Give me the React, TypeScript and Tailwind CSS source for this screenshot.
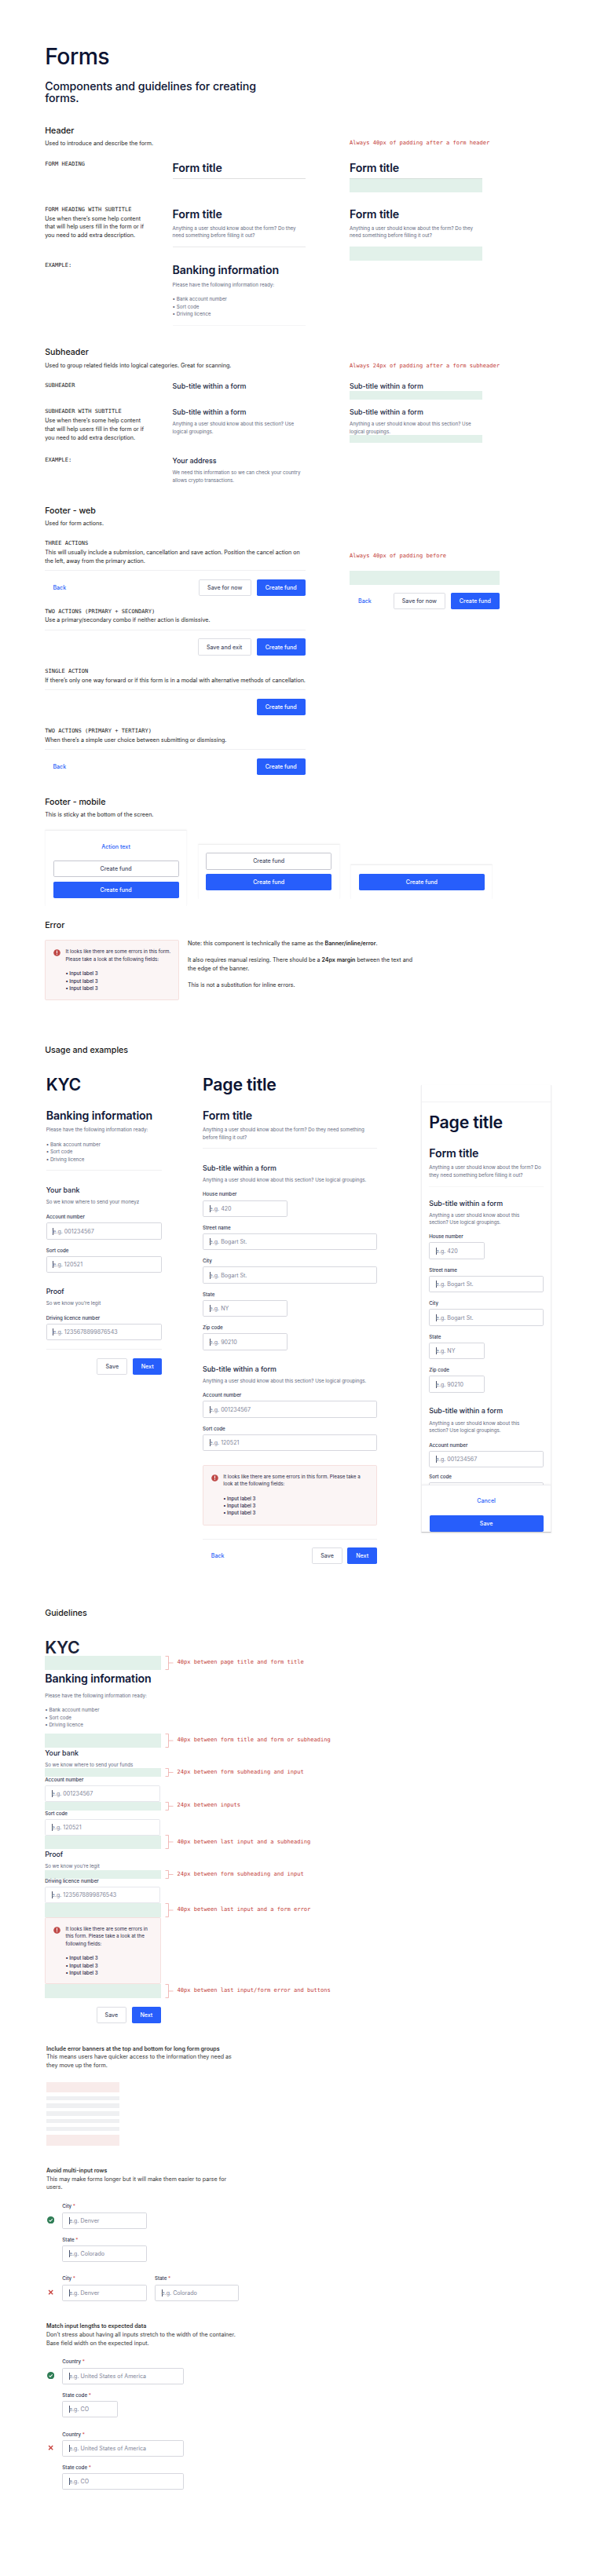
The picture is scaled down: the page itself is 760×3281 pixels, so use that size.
import type { ReactNode } from "react";

type Kids = { children: ReactNode; className?: string };

const H = ({ children }: { children: ReactNode }) => (
  <h2 className="text-[10.65px] leading-[13px] font-medium text-[#151515]">{children}</h2>
);
const P = ({ children, className = "text-[#222222]" }: Kids) => (
  <p className={`text-[7.1px] leading-[10.67px] ${className}`}>{children}</p>
);
const Small = ({ children, className = "" }: Kids) => (
  <p className={`text-[6.2px] leading-[9.33px] text-[#62677d] ${className}`}>{children}</p>
);
const Mono = ({ children, className = "text-[#1c1c1c]" }: Kids) => (
  <p className={`font-['DejaVu_Sans_Mono','Liberation_Mono',monospace] text-[7.05px] leading-[10.67px] ${className}`}>
    {children}
  </p>
);
const Note = ({ children, className = "" }: Kids) => (
  <Mono className={`text-[#bf3a36] ${className}`}>{children}</Mono>
);
const PageTitle = ({ children, className = "text-[#0c1433]" }: Kids) => (
  <h2 className={`text-[21.3px] leading-[26px] font-semibold tracking-[-0.01em] ${className}`}>{children}</h2>
);
const FormTitle = ({ children, className = "" }: Kids) => (
  <h3 className={`text-[14.2px] leading-[17px] font-semibold tracking-[-0.01em] text-[#0f1738] ${className}`}>
    {children}
  </h3>
);
const SubTitle = ({ children, className = "" }: Kids) => (
  <h4 className={`text-[8.87px] leading-[11px] font-medium text-[#151c3b] ${className}`}>{children}</h4>
);
const Rule = ({ className = "bg-[#f0f0f2]" }: { className?: string }) => <div className={`h-px ${className}`} />;
const Green = ({ className = "" }: { className?: string }) => <div className={`bg-[#e2f1ea] ${className}`} />;

const Sub = ({ title, children, className = "" }: Kids & { title: string }) => (
  <div className={className}>
    <SubTitle>{title}</SubTitle>
    <Small className="mt-[5.3px]">{children}</Small>
  </div>
);

function Button({
  children,
  kind = "primary",
  strong = false,
  className = "",
}: Kids & { kind?: "primary" | "secondary" | "link"; strong?: boolean }) {
  const look =
    kind === "primary"
      ? "bg-[#275efb] text-white"
      : kind === "secondary"
        ? strong
          ? "border border-[#c6c7d0] bg-white text-[#4a4f66]"
          : "border border-[#dcdde3] bg-white text-[#4a4f66]"
        : "text-[#2c62f8]";
  return (
    <button
      className={`flex h-[21.3px] shrink-0 items-center justify-center rounded-[1.8px] text-[7.1px] leading-[9px] font-medium ${look} ${className}`}
    >
      {children}
    </button>
  );
}

function Field({
  label,
  hint = "",
  required = false,
  className = "h-[32.4px]",
  box = "h-[21.3px] border-[#d6d7de]",
}: {
  label: string;
  hint?: string;
  required?: boolean;
  className?: string;
  box?: string;
}) {
  return (
    <div className={`shrink-0 ${className}`}>
      <div className="text-[6.2px] leading-[8px] font-medium text-[#2e344d]">
        {label}
        {required && <span className="text-[#d0453f]"> *</span>}
      </div>
      <div
        className={`mt-[3.1px] flex items-center rounded-[1.8px] border bg-white pl-[7.6px] text-[7.1px] leading-[9px] text-[#808497] ${box}`}
      >
        {hint && <span className="-mr-px h-[9px] w-px bg-[#4d5269]" />}
        {hint}
      </div>
    </div>
  );
}

function Banner({ children, className = "h-[77px]" }: Kids) {
  return (
    <div className={`flex rounded-[1.8px] border border-[#f5e0de] bg-[#fbf5f5] pt-[9.2px] ${className}`}>
      <svg viewBox="0 0 18 18" className="mt-[2px] ml-[10.2px] h-[9px] w-[9px] shrink-0">
        <circle cx="9" cy="9" r="8.6" fill="#bf4a48" />
        <path d="M9 4.2v5.6" stroke="#fff" strokeWidth="2" strokeLinecap="round" />
        <circle cx="9" cy="13" r="1.2" fill="#fff" />
      </svg>
      <div className="ml-[6px] text-[6.2px] leading-[9.33px] text-[#1e2442]">
        {children}
        <ul className="mt-[9.33px] font-medium">
          <li>• Input label 3</li>
          <li>• Input label 3</li>
          <li>• Input label 3</li>
        </ul>
      </div>
    </div>
  );
}

const bankBullets = (
  <>
    Please have the following information ready:
    <br />
    <br />• Bank account number
    <br />• Sort code
    <br />• Driving licence
  </>
);

const helpText = (
  <P className="mt-[1.2px] text-[#222222]">
    Use when there’s some help content
    <br />
    that will help users fill in the form or if
    <br />
    you need to add extra description.
  </P>
);

const formHelp = (
  <>
    Anything a user should know about the form? Do they
    <br />
    need something before filling it out?
  </>
);
const sectionHelp = (
  <>
    Anything a user should know about this section? Use
    <br />
    logical groupings.
  </>
);

const Row = ({ children, className = "" }: Kids) => (
  <div className={`grid grid-cols-[162.4px_169.2px_225.4px] ${className}`}>{children}</div>
);

function HeaderSection() {
  return (
    <section className="h-[282.6px] pl-[57.2px]">
      <H>Header</H>
      <div className="mt-[5.2px] flex">
        <P className="w-[387.8px] text-[#222222]">Used to introduce and describe the form.</P>
        <Note className="-mt-[0.6px]">Always 40px of padding after a form header</Note>
      </div>
      <Row className="mt-[15.1px] h-[58.3px]">
        <Mono>FORM HEADING</Mono>
        <div className="pt-[1.3px]">
          <FormTitle>Form title</FormTitle>
          <Rule className="mt-[5px] bg-[#dedede]" />
        </div>
        <div className="ml-[56.2px] w-[169.2px] pt-[1.3px]">
          <FormTitle>Form title</FormTitle>
          <Green className="mt-[5px] h-[18px] border-t border-[#d5dfda]" />
        </div>
      </Row>
      <Row className="h-[71.4px]">
        <div>
          <Mono>FORM HEADING WITH SUBTITLE</Mono>
          {helpText}
        </div>
        <div className="pt-[1.7px]">
          <FormTitle>Form title</FormTitle>
          <Small className="mt-[5.4px]">{formHelp}</Small>
          <Rule className="mt-[9.2px] bg-[#e8e8ea]" />
        </div>
        <div className="ml-[56.2px] w-[169.2px] pt-[1.7px]">
          <FormTitle>Form title</FormTitle>
          <Small className="mt-[5.4px]">{formHelp}</Small>
          <Green className="mt-[9.4px] h-[18.3px]" />
        </div>
      </Row>
      <Row>
        <Mono>EXAMPLE:</Mono>
        <div className="pt-[1.9px]">
          <FormTitle>Banking information</FormTitle>
          <Small className="mt-[5.5px]">{bankBullets}</Small>
          <Rule className="mt-[9.5px] bg-[#f5f5f6]" />
        </div>
      </Row>
    </section>
  );
}

function SubheaderSection() {
  return (
    <section className="h-[201.4px] pl-[57.2px]">
      <H>Subheader</H>
      <div className="mt-[5.6px] flex">
        <P className="w-[387.8px] text-[#222222]">
          Used to group related fields into logical categories. Great for scanning.
        </P>
        <Note>Always 24px of padding after a form subheader</Note>
      </div>
      <Row className="mt-[14.4px] h-[33px]">
        <Mono className="mt-[0.5px] text-[#1c1c1c]">SUBHEADER</Mono>
        <SubTitle>Sub-title within a form</SubTitle>
        <div className="ml-[56.2px] w-[169.2px]">
          <SubTitle>Sub-title within a form</SubTitle>
          <Green className="mt-[1.3px] h-[10.7px]" />
        </div>
      </Row>
      <Row className="h-[62px]">
        <div className="pt-[0.4px]">
          <Mono>SUBHEADER WITH SUBTITLE</Mono>
          {helpText}
        </div>
        <Sub title="Sub-title within a form">{sectionHelp}</Sub>
        <div className="ml-[56.2px] w-[169.2px]">
          <Sub title="Sub-title within a form">{sectionHelp}</Sub>
          <Green className="h-[10.5px]" />
        </div>
      </Row>
      <Row>
        <Mono>EXAMPLE:</Mono>
        <Sub title="Your address">
          We need this information so we can check your country
          <br />
          allows crypto transactions.
        </Sub>
      </Row>
    </section>
  );
}

function Actions({ title, text, children, className }: Kids & { title: string; text: ReactNode }) {
  return (
    <div className={className}>
      <Mono>{title}</Mono>
      <P className="mt-[1.1px] text-[#222222]">{text}</P>
      <Rule className="mt-[5.8px] bg-[#f0f0f2]" />
      <div className="mt-[10.5px] flex justify-end">{children}</div>
    </div>
  );
}

function FooterWebSection() {
  return (
    <section className="h-[371px] pl-[57.2px]">
      <H>Footer - web</H>
      <P className="mt-[5.2px] text-[#222222]">Used for form actions.</P>
      <div className="mt-[14.8px] flex">
        <div className="w-[331.6px]">
          <Actions
            className="h-[86.3px]"
            title="THREE ACTIONS"
            text={
              <>
                This will usually include a submission, cancellation and save action. Position the cancel action on
                <br />
                the left, away from the primary action.
              </>
            }
          >
            <Button kind="link" className="mr-auto ml-[10.2px]">Back</Button>
            <Button kind="secondary" className="mr-[7.1px] w-[66.6px]">Save for now</Button>
            <Button className="w-[62.2px]">Create fund</Button>
          </Actions>
          <Actions
            className="h-[76.3px]"
            title="TWO ACTIONS (PRIMARY + SECONDARY)"
            text="Use a primary/secondary combo if neither action is dismissive."
          >
            <Button kind="secondary" className="mr-[7.1px] w-[68px]">Save and exit</Button>
            <Button className="w-[62.2px]">Create fund</Button>
          </Actions>
          <Actions
            className="h-[76px]"
            title="SINGLE ACTION"
            text="If there’s only one way forward or if this form is in a modal with alternative methods of cancellation."
          >
            <Button className="w-[62.2px]">Create fund</Button>
          </Actions>
          <Actions
            className="h-[76px]"
            title="TWO ACTIONS (PRIMARY + TERTIARY)"
            text="When there’s a simple user choice between submitting or dismissing."
          >
            <Button kind="link" className="mr-auto ml-[10.2px]">Back</Button>
            <Button className="w-[62.2px]">Create fund</Button>
          </Actions>
        </div>
        <div className="ml-[56.2px] w-[191px] pt-[15.3px]">
          <Note>Always 40px of padding before</Note>
          <Green className="mt-[13.6px] h-[17.7px]" />
          <div className="mt-[10.6px] flex">
            <Button kind="link" className="mr-auto ml-[11px]">Back</Button>
            <Button kind="secondary" className="mr-[6.6px] w-[66.6px]">Save for now</Button>
            <Button className="w-[62.2px]">Create fund</Button>
          </div>
        </div>
      </div>
    </section>
  );
}

const mobileCard =
  "flex w-[180.8px] flex-col border-x border-t border-x-[#f9f9fa] border-t-[#eeeeef] px-[9.4px] pt-[10.3px] shadow-[0_-1px_2px_rgba(0,0,0,0.03)]";

function FooterMobileSection() {
  return (
    <section className="h-[157.6px] pl-[57.2px]">
      <H>Footer - mobile</H>
      <P className="mt-[5.8px] text-[#222222]">This is sticky at the bottom of the screen.</P>
      <div className="mt-[12.8px] flex items-start gap-[13.8px]">
        <div className={`${mobileCard} h-[97.3px]`}>
          <Button kind="link">Action text</Button>
          <Button kind="secondary" strong className="mt-[6.6px]">Create fund</Button>
          <Button className="mt-[5.6px]">Create fund</Button>
        </div>
        <div className={`${mobileCard} mt-[18px] h-[69.7px]`}>
          <Button kind="secondary" strong>Create fund</Button>
          <Button className="mt-[5.2px]">Create fund</Button>
        </div>
        <div className={`${mobileCard} mt-[44.4px] h-[43.3px]`}>
          <Button>Create fund</Button>
        </div>
      </div>
    </section>
  );
}

function ErrorSection() {
  return (
    <section className="h-[159px] pl-[57.2px]">
      <H>Error</H>
      <div className="mt-[11.8px] flex">
        <Banner className="h-[77px] w-[171.2px]">
          It looks like there are some errors in this form.
          <br />
          Please take a look at the following fields:
        </Banner>
        <P className="ml-[10.6px] text-[#222222]">
          Note: this component is technically the same as the <b className="font-semibold">Banner/inline/error</b>.
          <br />
          <br />
          It also requires manual resizing. There should be a <b className="font-semibold">24px margin</b> between the
          text and
          <br />
          the edge of the banner.
          <br />
          <br />
          This is not a substitution for inline errors.
        </P>
      </div>
    </section>
  );
}

function KycExample() {
  return (
    <div className="w-[147.8px]">
      <PageTitle>KYC</PageTitle>
      <FormTitle className="mt-[18px]">Banking information</FormTitle>
      <Small className="mt-[5.5px]">{bankBullets}</Small>
      <Rule className="mt-[9px] bg-[#f0f0f2]" />
      <Sub title="Your bank" className="mt-[18.7px]">So we know where to send your moneyz</Sub>
      <Field className="mt-[10.9px] h-[32.4px]" label="Account number" hint="e.g. 001234567" />
      <Field className="mt-[10.1px] h-[32.4px]" label="Sort code" hint="e.g. 120521" />
      <Sub title="Proof" className="mt-[17.8px]">So we know you’re legit</Sub>
      <Field className="mt-[10.2px] h-[32.4px]" label="Driving licence number" hint="e.g. 1235678899876543" />
      <Rule className="mt-[11.3px] bg-[#f0f0f2]" />
      <div className="mt-[10.5px] flex justify-end gap-[6.4px]">
        <Button kind="secondary" className="w-[39.3px]">Save</Button>
        <Button className="w-[37.7px]">Next</Button>
      </div>
    </div>
  );
}

function PageExample() {
  return (
    <div className="ml-[51.5px] w-[222px]">
      <PageTitle>Page title</PageTitle>
      <FormTitle className="mt-[18px]">Form title</FormTitle>
      <Small className="mt-[5.5px]">
        Anything a user should know about the form? Do they need something
        <br />
        before filling it out?
      </Small>
      <Rule className="mt-[8.8px] bg-[#f0f0f2]" />
      <Sub title="Sub-title within a form" className="mt-[18.7px]">
        Anything a user should know about this section? Use logical groupings.
      </Sub>
      <div className="mt-[10.2px] flex flex-col gap-[10.1px]">
        <Field label="House number" hint="e.g. 420" className="h-[32.4px] w-[108px]" />
        <Field label="Street name" hint="e.g. Bogart St." />
        <Field label="City" hint="e.g. Bogart St." />
        <Field label="State" hint="e.g. NY" className="h-[32.4px] w-[108px]" />
        <Field label="Zip code" hint="e.g. 90210" className="h-[32.4px] w-[108px]" />
      </div>
      <Sub title="Sub-title within a form" className="mt-[17.8px]">
        Anything a user should know about this section? Use logical groupings.
      </Sub>
      <div className="mt-[10.2px] flex flex-col gap-[10.1px]">
        <Field label="Account number" hint="e.g. 001234567" />
        <Field label="Sort code" hint="e.g. 120521" />
      </div>
      <Banner className="mt-[17.3px] h-[77px]">
        It looks like there are some errors in this form. Please take a
        <br />
        look at the following fields:
      </Banner>
      <Rule className="mt-[17.3px] bg-[#f0f0f2]" />
      <div className="mt-[10px] flex gap-[6.4px]">
        <Button kind="link" className="mr-auto ml-[10.8px]">Back</Button>
        <Button kind="secondary" className="w-[38.7px]">Save</Button>
        <Button className="w-[37.7px]">Next</Button>
      </div>
    </div>
  );
}

function PhoneExample() {
  const help = (
    <>
      Anything a user should know about this
      <br />
      section? Use logical groupings.
    </>
  );
  return (
    <div className="mt-[14.3px] ml-[56px] flex h-[570px] w-[166.3px] flex-col border-x border-b border-x-[#efeff1] border-b-[#c4c4c8] shadow-[0_1px_2px_rgba(0,0,0,0.08)]">
      <div className="h-[22px] shrink-0 border-b border-[#f1f1f3]" />
      <div className="min-h-0 flex-1 overflow-hidden px-[9.2px]">
        <PageTitle className="mt-[12px] text-[#0c1433]">Page title</PageTitle>
        <FormTitle className="mt-[17.7px]">Form title</FormTitle>
        <Small className="mt-[5.5px]">
          Anything a user should know about the form? Do
          <br />
          they need something before filling it out?
        </Small>
        <Rule className="mt-[9.8px] bg-[#f6f6f7]" />
        <Sub title="Sub-title within a form" className="mt-[14.7px]">{help}</Sub>
        <div className="mt-[9.8px] flex flex-col gap-[10.1px]">
          <Field label="House number" hint="e.g. 420" className="h-[32.4px] w-[71px]" />
          <Field label="Street name" hint="e.g. Bogart St." />
          <Field label="City" hint="e.g. Bogart St." />
          <Field label="State" hint="e.g. NY" className="h-[32.4px] w-[71px]" />
          <Field label="Zip code" hint="e.g. 90210" className="h-[32.4px] w-[71px]" />
        </div>
        <Sub title="Sub-title within a form" className="mt-[17.8px]">{help}</Sub>
        <Field className="mt-[10.1px] h-[32.4px]" label="Account number" hint="e.g. 001234567" />
        <Field className="mt-[8.3px] h-[32.4px]" label="Sort code" />
      </div>
      <div className="flex h-[60.6px] shrink-0 flex-col border-t border-[#ededf0] px-[9.7px] pt-[9.4px] shadow-[0_-1px_2px_rgba(0,0,0,0.04)]">
        <Button kind="link">Cancel</Button>
        <Button className="mt-[7.3px]">Save</Button>
      </div>
    </div>
  );
}

function UsageSection() {
  return (
    <section className="h-[716.7px] pl-[57.2px]">
      <H>Usage and examples</H>
      <div className="mt-[23.7px] ml-[1.5px] flex items-start">
        <KycExample />
        <PageExample />
        <PhoneExample />
      </div>
    </section>
  );
}

function Gap({ children, tall = false, className }: Kids & { tall?: boolean }) {
  return (
    <div className={`flex items-center ${className}`}>
      <Green className="h-full w-[148px]" />
      <svg
        viewBox={tall ? "0 0 11 18" : "0 0 11 11"}
        className={tall ? "ml-[5px] h-[18px] w-[11px]" : "ml-[5px] h-[11px] w-[11px]"}
      >
        <path
          d={tall ? "M0.5 0.5H4.5V17.5H0.5M4.5 9H10.5" : "M0.5 0.5H4.5V10.5H0.5M4.5 5.5H10.5"}
          fill="none"
          stroke="#eda9a6"
          strokeWidth="0.8"
        />
      </svg>
      <Note className="-mt-px ml-[4.3px]">{children}</Note>
    </div>
  );
}

const guideField = "h-[20.9px] border-[#e6e7ec]";

function SpacingGuide() {
  return (
    <div className="mt-[23.7px] w-[500px]">
      <PageTitle className="h-[24.3px] text-[#1b2338]">KYC</PageTitle>
      <Gap tall className="h-[17.7px]">40px between page title and form title</Gap>
      <FormTitle className="mt-[2.3px]">Banking information</FormTitle>
      <Small className="mt-[8.8px]">{bankBullets}</Small>
      <Gap tall className="mt-[6.5px] h-[17.7px]">40px between form title and form or subheading</Gap>
      <Sub title="Your bank" className="mt-px">So we know where to send your funds</Sub>
      <Gap className="h-[10.5px]">24px between form subheading and input</Gap>
      <Field className="mt-[0.4px] h-[32px] w-[147px]" box={guideField} label="Account number" hint="e.g. 001234567" />
      <Gap className="h-[10.5px]">24px between inputs</Gap>
      <Field className="h-[32px] w-[147px]" box={guideField} label="Sort code" hint="e.g. 120521" />
      <Gap tall className="h-[17.6px]">40px between last input and a subheading</Gap>
      <Sub title="Proof" className="mt-px">So we know you’re legit</Sub>
      <Gap className="mt-[0.4px] h-[10.5px]">24px between form subheading and input</Gap>
      <Field
        className="-mt-[0.6px] h-[32px] w-[147px]"
        box={guideField}
        label="Driving licence number"
        hint="e.g. 1235678899876543"
      />
      <Gap tall className="h-[17.9px]">40px between last input and a form error</Gap>
      <Banner className="h-[85px] w-[148px]">
        It looks like there are some errors in
        <br />
        this form. Please take a look at the
        <br />
        following fields:
      </Banner>
      <Gap tall className="h-[17.7px]">40px between last input/form error and buttons</Gap>
      <div className="mt-[11.4px] flex w-[148px] justify-end gap-[6.4px]">
        <Button kind="secondary" className="w-[38.5px]">Save</Button>
        <Button className="w-[37.7px]">Next</Button>
      </div>
    </div>
  );
}

const Check = () => (
  <svg viewBox="0 0 18 18" className="mt-[16.2px] mr-[10px] ml-px h-[9.3px] w-[9.3px] shrink-0">
    <circle cx="9" cy="9" r="9" fill="#2f7d55" />
    <path d="M5 9.3l2.8 2.8 5.2-5.4" fill="none" stroke="#fff" strokeWidth="2" />
  </svg>
);
const Cross = () => (
  <svg viewBox="0 0 18 18" className="mt-[16.9px] mr-[10px] ml-px h-[9.3px] w-[9.3px] shrink-0">
    <path d="M4 4l10 10M14 4L4 14" fill="none" stroke="#c8423e" strokeWidth="2.6" />
  </svg>
);

const bar = "mt-[4.2px] h-[5.55px] bg-[#eff0f2]";

function Tips() {
  return (
    <div className="mt-[27.2px] ml-[1.8px]">
      <P className="text-[#333333]">
        <b className="font-semibold">Include error banners at the top and bottom for long form groups</b>
        <br />
        This means users have quicker access to the information they need as
        <br />
        they move up the form.
      </P>
      <div className="mt-[15.1px] w-[93px]">
        <div className="h-[13.8px] bg-[#f8ebea]" />
        <div className={bar} />
        <div className={bar} />
        <div className={bar} />
        <div className={bar} />
        <div className={bar} />
        <div className="mt-[4.5px] h-[14px] bg-[#f8ebea]" />
      </div>
      <P className="mt-[27.5px] text-[#333333]">
        <b className="font-semibold">Avoid multi-input rows</b>
        <br />
        This may make forms longer but it will make them easier to parse for
        <br />
        users.
      </P>
      <div className="mt-[14.3px] flex">
        <Check />
        <div className="w-[107.4px]">
          <Field required label="City" hint="e.g. Denver" />
          <Field required className="mt-[10.1px] h-[32.4px]" label="State" hint="e.g. Colorado" />
        </div>
      </div>
      <div className="mt-[17.2px] flex">
        <Cross />
        <Field required className="h-[32.4px] w-[107.4px]" label="City" hint="e.g. Denver" />
        <Field required className="ml-[10.3px] h-[32.4px] w-[106.8px]" label="State" hint="e.g. Colorado" />
      </div>
      <P className="mt-[27.3px] text-[#333333]">
        <b className="font-semibold">Match input lengths to expected data</b>
        <br />
        Don’t stress about having all inputs stretch to the width of the container.
        <br />
        Base field width on the expected input.
      </P>
      <div className="mt-[14.3px] flex">
        <Check />
        <div className="w-[154.4px]">
          <Field required label="Country" hint="e.g. United States of America" />
          <Field required className="mt-[10.1px] h-[32.4px] w-[70.6px]" label="State code" hint="e.g. CO" />
        </div>
      </div>
      <div className="mt-[17.2px] flex">
        <Cross />
        <div className="w-[154.4px]">
          <Field required label="Country" hint="e.g. United States of America" />
          <Field required className="mt-[10.1px] h-[32.4px]" label="State code" hint="e.g. CO" />
        </div>
      </div>
    </div>
  );
}

export default function App() {
  return (
    <main className="h-[3281px] w-[760px] overflow-hidden bg-white font-['Inter',sans-serif] whitespace-nowrap">
      <header className="h-[159.7px] pt-[53.7px] pl-[57.2px] font-medium text-[#0c1433]">
        <h1 className="text-[28.4px] leading-[35px] tracking-[-0.02em]">Forms</h1>
        <p className="mt-[14.7px] text-[14.2px] leading-[14.2px] tracking-[-0.005em]">
          Components and guidelines for creating
          <br />
          forms.
        </p>
      </header>
      <HeaderSection />
      <SubheaderSection />
      <FooterWebSection />
      <FooterMobileSection />
      <ErrorSection />
      <UsageSection />
      <section className="pl-[57.2px]">
        <H>Guidelines</H>
        <SpacingGuide />
        <Tips />
      </section>
    </main>
  );
}
